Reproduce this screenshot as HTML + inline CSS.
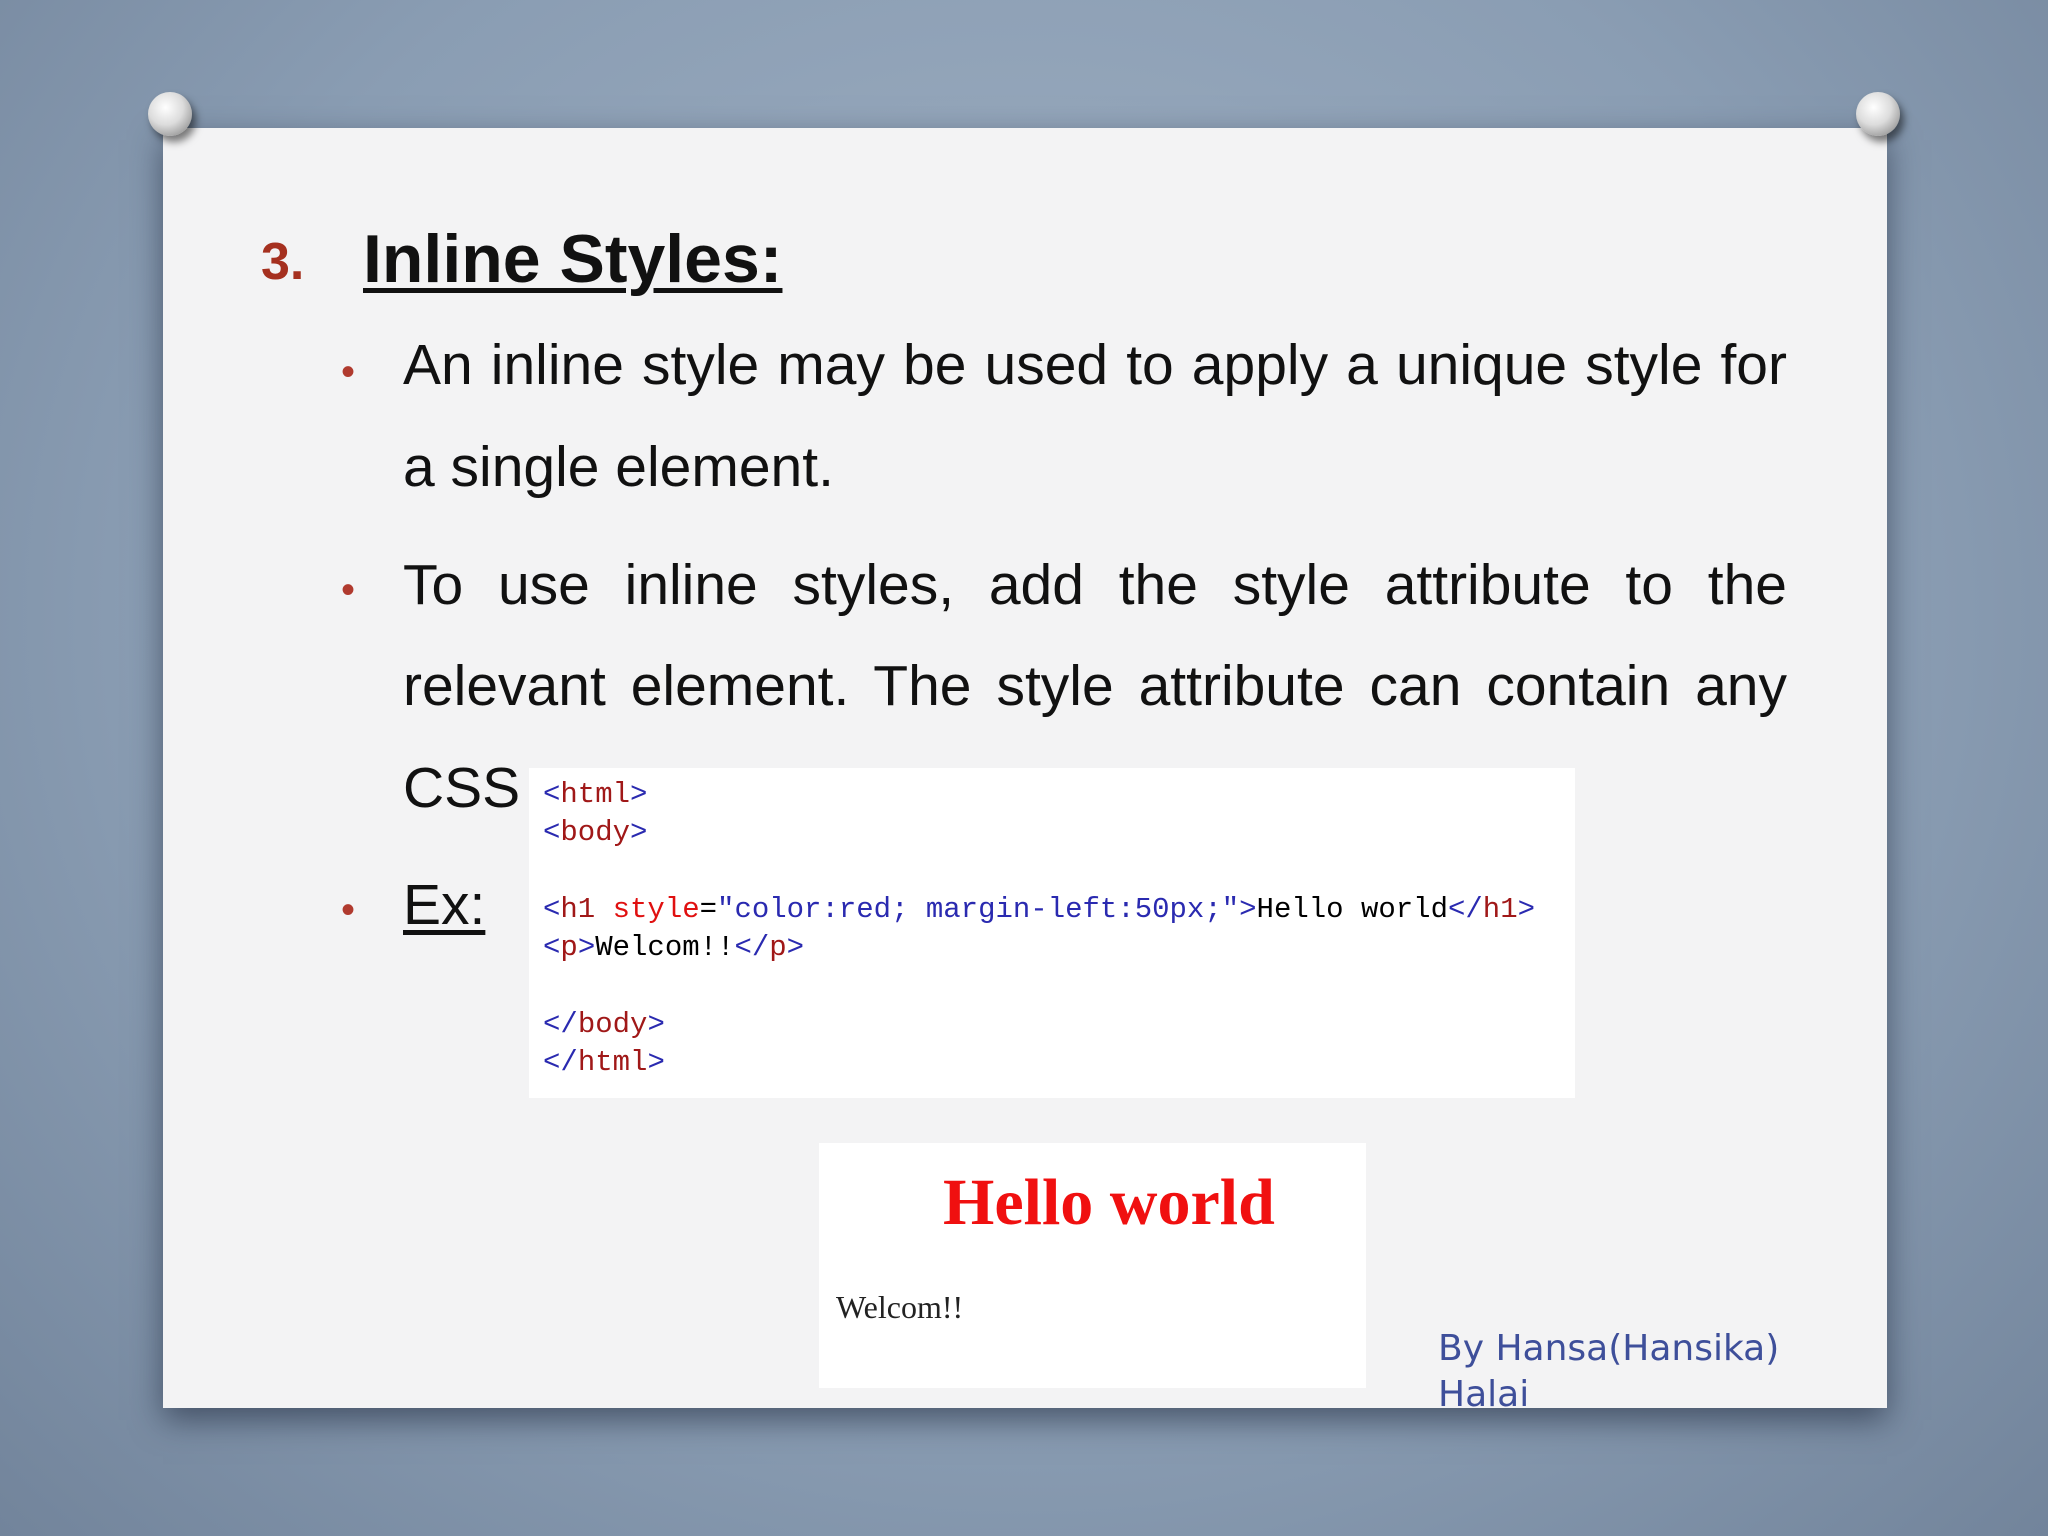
<!DOCTYPE html>
<html><head><meta charset="utf-8"><style>
html,body{margin:0;padding:0}
body{width:2048px;height:1536px;position:relative;overflow:hidden;
background:radial-gradient(ellipse at 50% 40%,#a3b3c5 0%,#8a9db3 60%,#72849b 100%);
font-family:"Liberation Sans",Arial,sans-serif}
.slide{position:absolute;left:163px;top:128px;width:1724px;height:1280px;background:#f3f3f4;
box-shadow:0 12px 30px rgba(30,40,60,.6);overflow:hidden}
.t{position:absolute;white-space:nowrap}
.j{position:absolute;left:240px;width:1384px;font-size:57px;color:#111;text-align:justify;text-align-last:justify;white-space:normal}
.pin{position:absolute;width:44px;height:44px;border-radius:50%;
background:radial-gradient(circle at 40% 35%,#fff 0%,#dcdcdc 45%,#777 100%);box-shadow:4px 6px 8px rgba(0,0,0,.5)}
.code{position:absolute;left:529px;top:768px;width:1046px;height:330px;background:#fff}
.code div{position:absolute;left:14px;font-family:"Liberation Mono",monospace;font-size:29px;white-space:nowrap;color:#000}
.tg{color:#2a2ab0}.tn{color:#a01818}.at{color:#e01010}.v{color:#2a2ab0}
</style></head><body>
<div class="slide">
<div class="t" style="left:98px;top:104px;font-size:52px;font-weight:bold;color:#a5301f">3.</div>
<div class="t" style="left:200px;top:92px;font-size:68px;font-weight:bold;color:#111;text-decoration:underline;text-decoration-thickness:5px;text-underline-offset:6px">Inline Styles:</div>
<div class="t" style="left:178px;top:222px;font-size:40px;color:#b03a2e">•</div>
<div class="j" style="top:204px">An inline style may be used to apply a unique style for</div>
<div class="t" style="left:240px;top:306px;font-size:57px;color:#111">a single element.</div>
<div class="t" style="left:178px;top:440px;font-size:40px;color:#b03a2e">•</div>
<div class="j" style="top:424px">To use inline styles, add the style attribute to the</div>
<div class="j" style="top:525px">relevant element. The style attribute can contain any</div>
<div class="t" style="left:240px;top:627px;font-size:57px;color:#111">CSS</div>
<div class="t" style="left:178px;top:760px;font-size:40px;color:#b03a2e">•</div>
<div class="t" style="left:240px;top:744px;font-size:57px;color:#111;text-decoration:underline;text-underline-offset:6px">Ex:</div>
<div style="position:absolute;left:656px;top:1015px;width:547px;height:245px;background:#fff">
<div class="t" style="left:124px;top:22px;font-family:'Liberation Serif',serif;font-weight:bold;font-size:66px;color:#f01010">Hello world</div>
<div class="t" style="left:17px;top:146px;font-family:'Liberation Serif',serif;font-size:32px;color:#222">Welcom!!</div>
</div>
<div class="t" style="left:1275px;top:1198px;color:#3e4f9a;line-height:46px;font-family:'DejaVu Sans',sans-serif;font-size:36px">By Hansa(Hansika)<br>Halai</div>
</div>
<div class="code">
<div style="top:10px"><span class="tg">&lt;</span><span class="tn">html</span><span class="tg">&gt;</span></div>
<div style="top:48px"><span class="tg">&lt;</span><span class="tn">body</span><span class="tg">&gt;</span></div>
<div style="top:125px"><span class="tg">&lt;</span><span class="tn">h1 </span><span class="at">style</span>=<span class="v">"color:red; margin-left:50px;"</span><span class="tg">&gt;</span>Hello world<span class="tg">&lt;/</span><span class="tn">h1</span><span class="tg">&gt;</span></div>
<div style="top:163px"><span class="tg">&lt;</span><span class="tn">p</span><span class="tg">&gt;</span>Welcom!!<span class="tg">&lt;/</span><span class="tn">p</span><span class="tg">&gt;</span></div>
<div style="top:240px"><span class="tg">&lt;/</span><span class="tn">body</span><span class="tg">&gt;</span></div>
<div style="top:278px"><span class="tg">&lt;/</span><span class="tn">html</span><span class="tg">&gt;</span></div>
</div>
<div class="pin" style="left:148px;top:92px"></div>
<div class="pin" style="left:1856px;top:92px"></div>
</body></html>
